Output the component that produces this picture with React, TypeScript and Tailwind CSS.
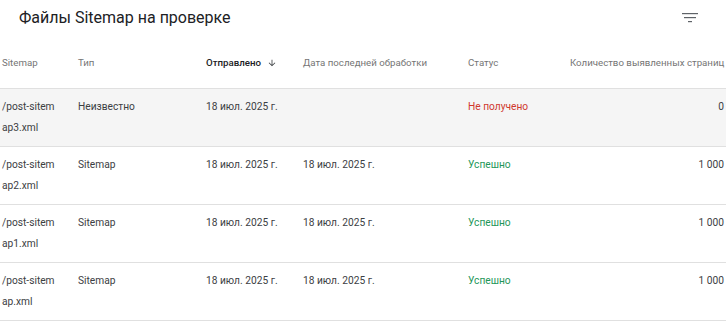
const rows = [
  { a: '/post-sitem', b: 'ap3.xml', type: 'Неизвестно', sent: '18 июл. 2025 г.', last: '', status: 'Не получено', ok: false, count: '0', shaded: true },
  { a: '/post-sitem', b: 'ap2.xml', type: 'Sitemap', sent: '18 июл. 2025 г.', last: '18 июл. 2025 г.', status: 'Успешно', ok: true, count: '1 000', shaded: false },
  { a: '/post-sitem', b: 'ap1.xml', type: 'Sitemap', sent: '18 июл. 2025 г.', last: '18 июл. 2025 г.', status: 'Успешно', ok: true, count: '1 000', shaded: false },
  { a: '/post-sitem', b: 'ap.xml', type: 'Sitemap', sent: '18 июл. 2025 г.', last: '18 июл. 2025 г.', status: 'Успешно', ok: true, count: '1 000', shaded: false },
];

const cols = 'grid grid-cols-[76px_128px_97px_165px_102px_1fr] pl-[2px] pr-[2px]';

export default function App() {
  return (
    <div className="w-[726px] h-[322px] overflow-hidden bg-white font-['Roboto',sans-serif]">
      <div className="flex items-center justify-between h-[34px] pl-[19px] pr-[28px]">
        <h2 className="text-[16px] text-[#202124] leading-none pt-[1px]">Файлы Sitemap на проверке</h2>
        <svg width="16" height="10" viewBox="0 0 16 10" className="mt-[1px]">
          <rect x="0" y="0" width="16" height="1.2" fill="#5f6368" />
          <rect x="2" y="4" width="12" height="1.2" fill="#5f6368" />
          <rect x="6" y="8" width="4" height="1.2" fill="#5f6368" />
        </svg>
      </div>

      <div className={`${cols} h-[55px] items-center border-b border-[#e0e0e0] text-[9.7px] text-[#757575] whitespace-nowrap`}>
        <div className="pt-[4px]">Sitemap</div>
        <div className="pt-[4px]">Тип</div>
        <div className="pt-[4px] flex items-center gap-[6px] font-medium text-[#202124]">
          Отправлено
          <svg width="10" height="10" viewBox="0 0 24 24">
            <path d="M20 12l-1.41-1.41L13 16.17V4h-2v12.17l-5.58-5.59L4 12l8 8 8-8z" fill="#3c4043" />
          </svg>
        </div>
        <div className="pt-[4px]">Дата последней обработки</div>
        <div className="pt-[4px]">Статус</div>
        <div className="pt-[4px]">Количество выявленных страниц</div>
      </div>

      {rows.map((r, i) => (
        <div
          key={i}
          className={`${cols} h-[58px] pt-[7px] border-b border-[#e0e0e0] text-[10.2px] leading-[21px] text-[#3c4043] ${r.shaded ? 'bg-[#f5f5f5]' : ''}`}
        >
          <div>
            <div>{r.a}</div>
            <div>{r.b}</div>
          </div>
          <div>{r.type}</div>
          <div className="whitespace-nowrap">{r.sent}</div>
          <div className="whitespace-nowrap">{r.last}</div>
          <div className={r.ok ? 'text-[#1e9659]' : 'text-[#d0382e]'}>{r.status}</div>
          <div className="text-right">{r.count}</div>
        </div>
      ))}
    </div>
  );
}
